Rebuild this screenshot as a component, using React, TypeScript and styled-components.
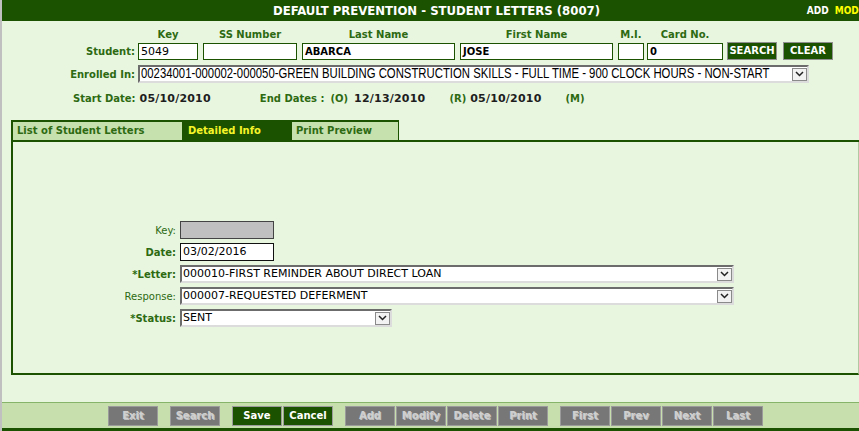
import React from "react";
import styled, { createGlobalStyle } from "styled-components";

const DARK = "#1b5200";
const LABEL = "#2d6a12";
const BG = "#e8f6e0";
const TAB = "#c6e0ae";

const GlobalStyle = createGlobalStyle`
  body {
    margin: 0;
    background: ${BG};
    font-family: "DejaVu Sans", Verdana, sans-serif;
  }
`;

const Page = styled.div`
  width: 859px;
  height: 431px;
  box-sizing: border-box;
  border-left: 2px solid #c0c0c0;
  background: ${BG};
  display: flex;
  flex-direction: column;
  overflow: hidden;
`;

const Header = styled.div`
  height: 21px;
  flex: none;
  background: ${DARK};
  display: grid;
  grid-template-columns: 1fr auto 1fr;
  align-items: center;
  padding-left: 12px;
`;

const Title = styled.div`
  grid-column: 2;
  color: #fff;
  font-family: "DejaVu Sans Condensed", "DejaVu Sans", sans-serif;
  font-weight: bold;
  font-size: 13px;
  white-space: nowrap;
`;

const Mode = styled.div`
  grid-column: 3;
  justify-self: end;
  color: #fff;
  font-family: "DejaVu Sans Condensed", "DejaVu Sans", sans-serif;
  font-weight: bold;
  font-size: 10px;
  white-space: nowrap;
  margin-right: -6px;
  span {
    color: #ffff00;
    margin-left: 6px;
  }
`;

const Row = styled.div<{ $top: number }>`
  display: flex;
  align-items: flex-end;
  margin-top: ${(p) => p.$top}px;
  flex: none;
`;

const RowLabel = styled.div`
  width: 136px;
  flex: none;
  box-sizing: border-box;
  padding-right: 3px;
  text-align: right;
  color: ${LABEL};
  font-weight: bold;
  font-size: 10px;
  line-height: 17px;
  white-space: nowrap;
`;

const Field = styled.div<{ $gap: number }>`
  display: flex;
  flex-direction: column;
  align-items: center;
  margin-left: ${(p) => p.$gap}px;
`;

const ColHead = styled.div`
  height: 14px;
  line-height: 14px;
  margin-bottom: 1px;
  color: ${LABEL};
  font-weight: bold;
  font-size: 10px;
  white-space: nowrap;
`;

const TextBox = styled.div<{ $w: number; $bold?: boolean }>`
  width: ${(p) => p.$w}px;
  height: 17px;
  box-sizing: border-box;
  border: 1px solid ${DARK};
  background: #fff;
  padding-left: 2px;
  font-size: ${(p) => (p.$bold ? "10px" : "11px")};
  font-weight: ${(p) => (p.$bold ? "bold" : "normal")};
  line-height: 15px;
  color: #000;
  white-space: nowrap;
  overflow: hidden;
`;

const GreenButton = styled.div<{ $gap: number }>`
  width: 50px;
  height: 18px;
  box-sizing: border-box;
  margin-left: ${(p) => p.$gap}px;
  background: ${DARK};
  border: 1px solid #8f8f8f;
  color: #fff;
  font-weight: bold;
  font-size: 10px;
  line-height: 16px;
  text-align: center;
`;

const SelectBox = styled.div<{ $w: number }>`
  width: ${(p) => p.$w}px;
  height: 18px;
  box-sizing: border-box;
  display: flex;
  align-items: center;
  background: #fff;
  border-top: 2px solid #6c6c6c;
  border-left: 2px solid #6c6c6c;
  border-bottom: 2px solid #dcdcdc;
  border-right: 2px solid #dcdcdc;
  padding-left: 1px;
  font-size: 11px;
  color: #000;
  white-space: nowrap;
  overflow: hidden;
`;

const SelectText = styled.span`
  flex: 1;
  overflow: hidden;
  line-height: 14px;
`;

/* the enrolled program is shown in a narrow sans face */
const NarrowText = styled.span`
  display: inline-block;
  font-family: "Liberation Sans", Arial, sans-serif;
  font-size: 14px;
  line-height: 14px;
  transform: scaleX(0.81);
  transform-origin: left center;
`;

const ArrowBox = styled.div`
  width: 15px;
  height: 13px;
  box-sizing: border-box;
  flex: none;
  border: 1px solid #8a8a8a;
  background: #f2f2f2;
  display: flex;
  align-items: center;
  justify-content: center;
`;

function Select({ w, text, narrow }: { w: number; text: string; narrow?: boolean }) {
  return (
    <SelectBox $w={w}>
      <SelectText>{narrow ? <NarrowText>{text}</NarrowText> : text}</SelectText>
      <ArrowBox>
        <svg width="9" height="6" viewBox="0 0 9 6">
          <polyline points="1,1 4.5,4.5 8,1" fill="none" stroke="#222" strokeWidth="1.5" />
        </svg>
      </ArrowBox>
    </SelectBox>
  );
}

const DatesRow = styled.div`
  display: flex;
  align-items: center;
  height: 14px;
  margin-top: 8px;
  flex: none;
  font-weight: bold;
  white-space: nowrap;
`;

const DateLabel = styled.span<{ $gap: number }>`
  color: ${LABEL};
  font-size: 10px;
  margin-left: ${(p) => p.$gap}px;
`;

const DateValue = styled.span<{ $gap: number }>`
  color: #1e1e1e;
  font-size: 11px;
  letter-spacing: 0.2px;
  margin-left: ${(p) => p.$gap}px;
`;

const TabArea = styled.div`
  margin-left: 9px;
  margin-top: 15px;
  flex: none;
`;

const TabStrip = styled.div`
  display: flex;
  border-bottom: 2px solid ${DARK};
`;

const Tab = styled.div<{ $w: number; $active?: boolean }>`
  width: ${(p) => p.$w}px;
  height: 20px;
  box-sizing: border-box;
  border-top: 2px solid ${DARK};
  border-left: 1px solid ${DARK};
  border-right: 1px solid ${DARK};
  background: ${(p) => (p.$active ? DARK : TAB)};
  color: ${(p) => (p.$active ? "#f5f52a" : LABEL)};
  font-weight: bold;
  font-size: 10px;
  line-height: 18px;
  padding-left: 4px;
  white-space: nowrap;
  &:first-child {
    border-left-width: 2px;
  }
`;

const PanelBody = styled.div`
  height: 233px;
  box-sizing: border-box;
  border-left: 2px solid ${DARK};
  border-bottom: 2px solid ${DARK};
  border-right: 1px solid #b2c8a2;
  padding-top: 79px;
`;

const Form = styled.div`
  display: grid;
  grid-template-columns: 163px auto;
  column-gap: 4px;
  row-gap: 4px;
  justify-content: start;
  align-items: center;
`;

const FormLabel = styled.div<{ $bold?: boolean }>`
  text-align: right;
  color: ${LABEL};
  font-size: 10px;
  font-weight: ${(p) => (p.$bold ? "bold" : "normal")};
  white-space: nowrap;
`;

const PlainBox = styled.div<{ $gray?: boolean }>`
  width: 94px;
  height: 18px;
  box-sizing: border-box;
  border: 1px solid ${(p) => (p.$gray ? "#444" : "#111")};
  background: ${(p) => (p.$gray ? "#c0c0c0" : "#fff")};
  padding-left: 2px;
  font-size: 11px;
  line-height: 16px;
  color: #000;
`;

const Footer = styled.div`
  margin-top: auto;
  height: 29px;
  box-sizing: border-box;
  flex: none;
  border-top: 1px solid #86b56a;
  border-bottom: 3px solid ${DARK};
  background: #c6dfad;
  display: flex;
  align-items: flex-start;
  padding: 3px 0 0 106px;
`;

const Group = styled.div`
  display: flex;
  gap: 1px;
  margin-right: 12px;
`;

const ActionButton = styled.div<{ $on?: boolean }>`
  width: 50px;
  height: 20px;
  box-sizing: border-box;
  border: 1px solid #9b9b9b;
  background: ${(p) => (p.$on ? DARK : "#777777")};
  color: ${(p) => (p.$on ? "#fff" : "#cfcfcf")};
  text-shadow: ${(p) => (p.$on ? "none" : "1px 1px 0 rgba(255,255,255,0.55)")};
  font-weight: bold;
  font-size: 10px;
  line-height: 18px;
  text-align: center;
`;

const studentFields = [
  { head: "Key", w: 60, gap: 0, value: "5049", bold: false },
  { head: "SS Number", w: 94, gap: 5, value: "", bold: false },
  { head: "Last Name", w: 153, gap: 5, value: "ABARCA", bold: true },
  { head: "First Name", w: 153, gap: 5, value: "JOSE", bold: true },
  { head: "M.I.", w: 26, gap: 5, value: "", bold: false },
  { head: "Card No.", w: 76, gap: 3, value: "0", bold: true },
];

const footerGroups = [
  [{ t: "Exit" }],
  [{ t: "Search" }],
  [{ t: "Save", on: true }, { t: "Cancel", on: true }],
  [{ t: "Add" }, { t: "Modify" }, { t: "Delete" }, { t: "Print" }],
  [{ t: "First" }, { t: "Prev" }, { t: "Next" }, { t: "Last" }],
];

export default function App() {
  return (
    <Page>
      <GlobalStyle />
      <Header>
        <Title>DEFAULT PREVENTION - STUDENT LETTERS (8007)</Title>
        <Mode>
          ADD<span>MODE</span>
        </Mode>
      </Header>

      <Row $top={7}>
        <RowLabel>Student:</RowLabel>
        {studentFields.map((f) => (
          <Field key={f.head} $gap={f.gap}>
            <ColHead>{f.head}</ColHead>
            <TextBox $w={f.w} $bold={f.bold}>
              {f.value}
            </TextBox>
          </Field>
        ))}
        <GreenButton $gap={4}>SEARCH</GreenButton>
        <GreenButton $gap={6}>CLEAR</GreenButton>
      </Row>

      <Row $top={5}>
        <RowLabel>Enrolled In:</RowLabel>
        <Select
          w={671}
          narrow
          text="00234001-000002-000050-GREEN BUILDING CONSTRUCTION SKILLS - FULL TIME - 900 CLOCK HOURS - NON-START"
        />
      </Row>

      <DatesRow>
        <DateLabel $gap={71}>Start Date:</DateLabel>
        <DateValue $gap={4}>05/10/2010</DateValue>
        <DateLabel $gap={49}>End Dates :</DateLabel>
        <DateLabel $gap={6}>(O)</DateLabel>
        <DateValue $gap={6}>12/13/2010</DateValue>
        <DateLabel $gap={24}>(R)</DateLabel>
        <DateValue $gap={4}>05/10/2010</DateValue>
        <DateLabel $gap={24}>(M)</DateLabel>
      </DatesRow>

      <TabArea>
        <TabStrip>
          <Tab $w={172}>List of Student Letters</Tab>
          <Tab $w={108} $active>
            Detailed Info
          </Tab>
          <Tab $w={108}>Print Preview</Tab>
        </TabStrip>
        <PanelBody>
          <Form>
            <FormLabel>Key:</FormLabel>
            <PlainBox $gray />
            <FormLabel $bold>Date:</FormLabel>
            <PlainBox>03/02/2016</PlainBox>
            <FormLabel $bold>*Letter:</FormLabel>
            <Select w={554} text="000010-FIRST REMINDER ABOUT DIRECT LOAN" />
            <FormLabel>Response:</FormLabel>
            <Select w={554} text="000007-REQUESTED DEFERMENT" />
            <FormLabel $bold>*Status:</FormLabel>
            <Select w={212} text="SENT" />
          </Form>
        </PanelBody>
      </TabArea>

      <Footer>
        {footerGroups.map((g, i) => (
          <Group key={i}>
            {g.map((b) => (
              <ActionButton key={b.t} $on={"on" in b ? b.on : false}>
                {b.t}
              </ActionButton>
            ))}
          </Group>
        ))}
      </Footer>
    </Page>
  );
}
